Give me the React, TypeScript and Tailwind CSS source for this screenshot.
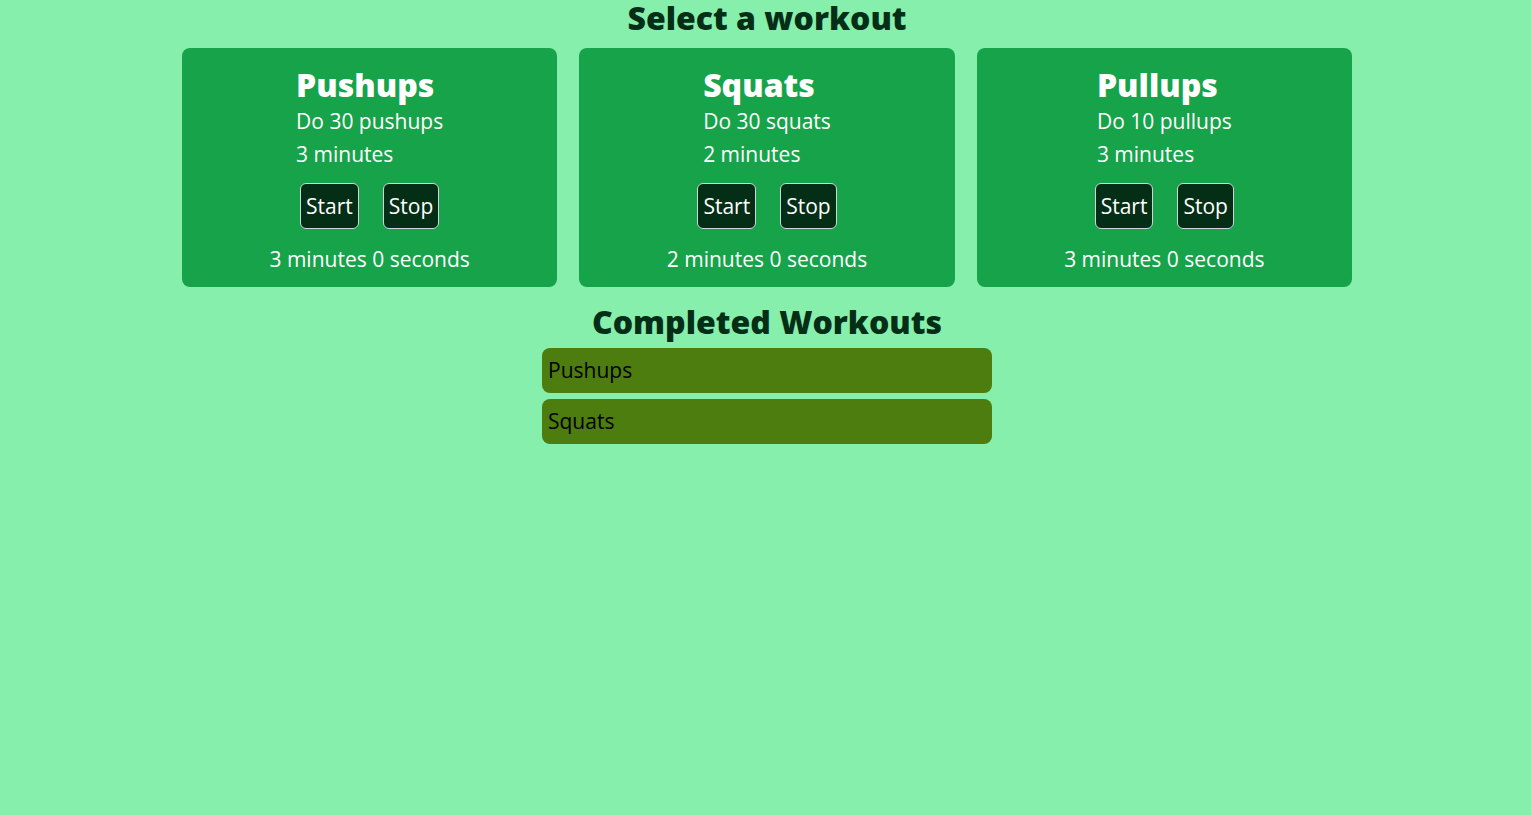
import React from "react";

const workouts = [
  { name: "Pushups", desc: "Do 30 pushups", mins: 3 },
  { name: "Squats", desc: "Do 30 squats", mins: 2 },
  { name: "Pullups", desc: "Do 10 pullups", mins: 3 },
];

const completed = ["Pushups", "Squats"];

export default function App() {
  return (
    <div
      className="min-h-[815px] w-full bg-[#86efac] pl-[3px]"
      style={{ fontFamily: '"Open Sans", "Noto Sans", sans-serif' }}
    >
      <h1 className="text-center text-[32px] leading-[36px] font-extrabold text-[#052e16]">
        Select a workout
      </h1>
      <div className="mx-auto mt-[12px] grid w-[1170px] grid-cols-3 gap-[22px]">
        {workouts.map((w) => (
          <div
            key={w.name}
            className="flex flex-col items-center rounded-lg bg-[#16a34a] pt-[19px] pb-[14px] text-white"
          >
            <div className="flex flex-col items-start">
              <h2 className="text-[32px] leading-[36px] font-extrabold">{w.name}</h2>
              <p className="mt-[2px] text-[21px] leading-[33px]">{w.desc}</p>
              <p className="text-[21px] leading-[33px]">{w.mins} minutes</p>
            </div>
            <div className="mt-[12px] flex gap-[24px]">
              <button className="h-[46px] rounded-md border border-[#d1d5db] bg-[#052e16] px-[5px] text-[21px] leading-[28px] text-white">
                Start
              </button>
              <button className="h-[46px] rounded-md border border-[#d1d5db] bg-[#052e16] px-[5px] text-[21px] leading-[28px] text-white">
                Stop
              </button>
            </div>
            <p className="mt-[16px] text-[21px] leading-[28px]">
              {w.mins} minutes 0 seconds
            </p>
          </div>
        ))}
      </div>
      <h2 className="mt-[17px] text-center text-[32px] leading-[36px] font-extrabold text-[#052e16]">
        Completed Workouts
      </h2>
      <div className="mx-auto mt-[8px] flex w-[450px] flex-col gap-[6px]">
        {completed.map((c) => (
          <div
            key={c}
            className="flex h-[45px] items-center rounded-lg bg-[#4d7c0f] px-[6px] text-[21px] text-black"
          >
            {c}
          </div>
        ))}
      </div>
    </div>
  );
}
